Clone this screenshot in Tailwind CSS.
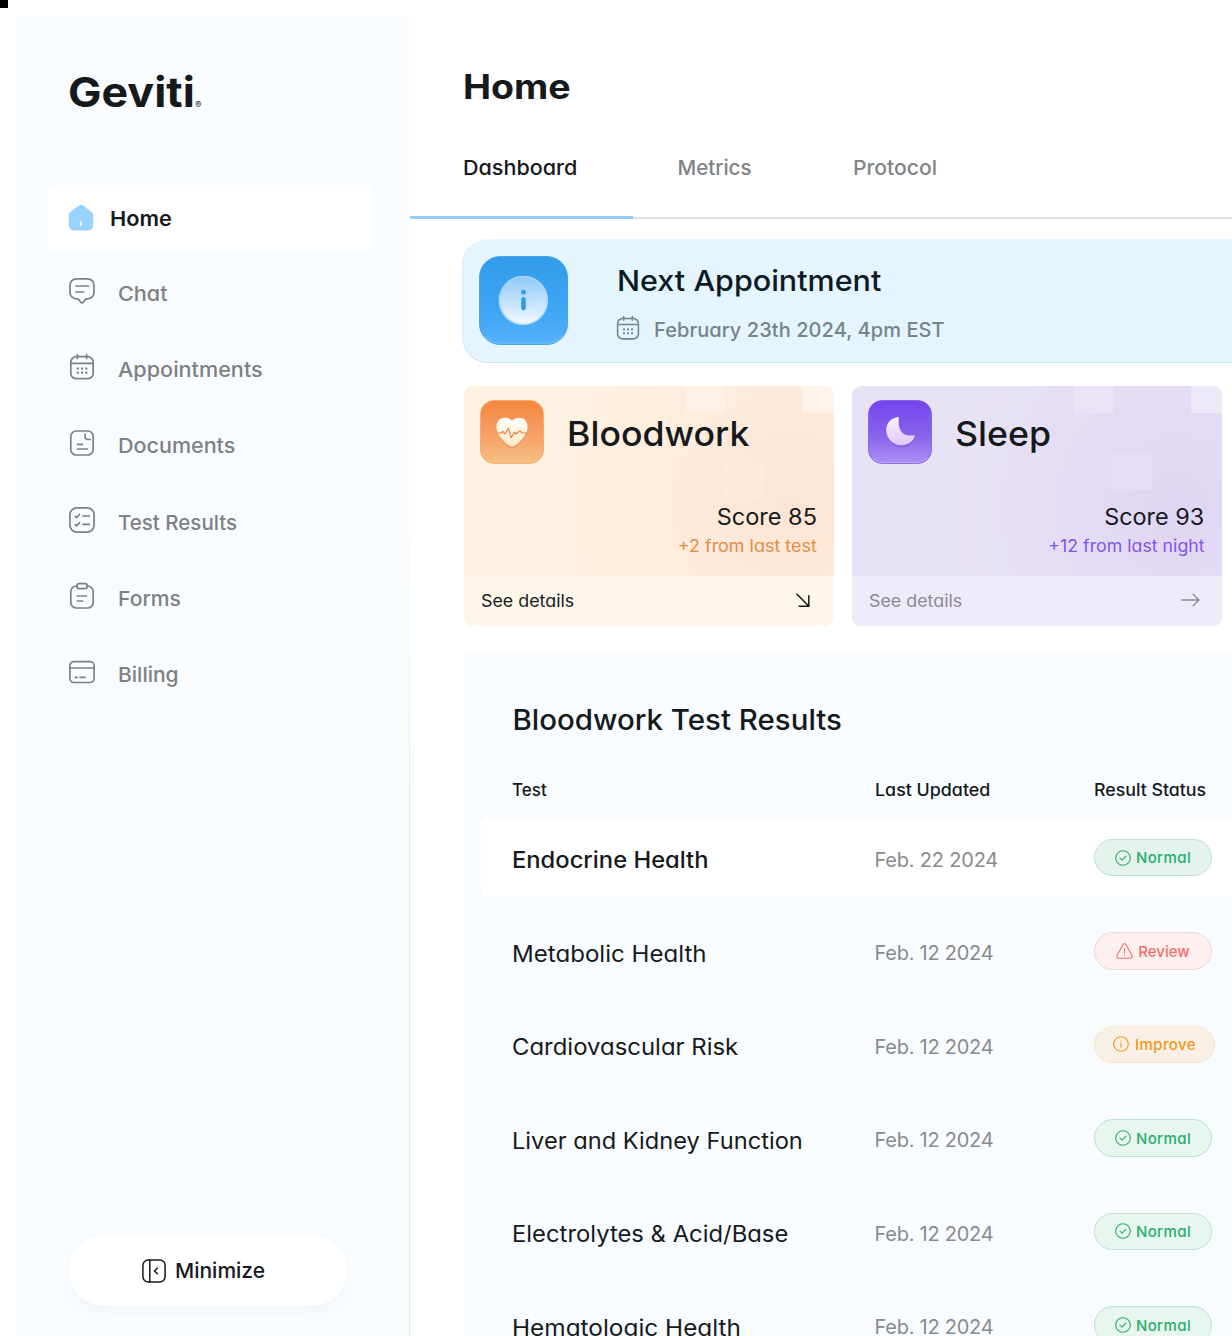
<!DOCTYPE html>
<html lang="en">
<head>
<meta charset="utf-8">
<title>Geviti</title>
<script src="https://cdn.jsdelivr.net/npm/@tailwindcss/browser@4"></script>
</head>
<body class="relative flex h-[1336px] w-[1232px] overflow-hidden bg-white font-['Inter',sans-serif] text-[#16191c] [font-feature-settings:'cv11']">
<div class="absolute left-0 top-0 size-2 bg-black"></div>

<svg class="hidden">
  <symbol id="calendar" viewBox="0 0 28 28"><g fill="none" stroke="currentColor" stroke-width="1.7" stroke-linecap="round"><rect x="2.8" y="3.7" width="22.4" height="22" rx="5.5"/><path d="M3 10.3h22M9.4 1.6v4M18.6 1.6v4"/></g><g fill="currentColor"><rect x="8.7" y="14.5" width="2.1" height="2.1"/><rect x="13" y="14.5" width="2.1" height="2.1"/><rect x="17.3" y="14.5" width="2.1" height="2.1"/><rect x="8.7" y="18.6" width="2.1" height="2.1"/><rect x="13" y="18.6" width="2.1" height="2.1"/><rect x="17.3" y="18.6" width="2.1" height="2.1"/></g></symbol>
  <symbol id="check" viewBox="0 0 16 16"><g fill="none" stroke="currentColor" stroke-width="1.1" stroke-linecap="round" stroke-linejoin="round"><circle cx="8" cy="8" r="7.3"/><path d="M5 8.2l2.1 2 3.8-4"/></g></symbol>
</svg>

<aside class="mt-4 ml-4 flex w-[393px] shrink-0 flex-col rounded-tl-md bg-[#f8fcff]">
  <div class="mt-14 flex h-10 items-center pl-[52px]">
    <span class="inline-block origin-left scale-x-[1.09] text-[41px] font-bold leading-10">Geviti</span><span class="mt-6 ml-[11px] text-[9px] leading-none">®</span>
  </div>
  <nav class="mt-[73px] flex flex-col text-[20.5px] font-medium leading-7 text-[#7d8184]">
    <a class="ml-[31px] flex h-[66px] w-[325px] items-center rounded-md bg-white pl-[21px] font-semibold text-[#16191c]">
      <svg class="size-[26px]" viewBox="0 0 25 25"><path d="M10.200.8a3.800 3.800 0 0 1 4.600 0l7.400 5.400A5 5 0 0 1 24.300 10.300v9.200a5 5 0 0 1-5 5H5.700a5 5 0 0 1-5-5V10.300a5 5 0 0 1 2.100-4.100z" fill="#99d3ff"/><path d="M12.300 15.200v4.800" stroke="#fff" stroke-width="1.300"/></svg>
      <span class="mt-[2px] ml-4 origin-left scale-x-[1.06]">Home</span>
    </a>
    <a class="mt-1 flex h-[76.3px] items-center pl-[52px]">
      <svg class="-mt-[5px] size-7" viewBox="0 0 28 28" fill="none" stroke="currentColor" stroke-width="1.700" stroke-linecap="round" stroke-linejoin="round"><path d="M8.300 1.800h11.400a6.300 6.300 0 0 1 6.300 6.300v7.400a6.300 6.300 0 0 1-6.300 6.300h-.7c-.9 0-1.600.4-2.100 1.100l-1.600 2.300a1.600 1.600 0 0 1-2.600 0l-1.600-2.300c-.5-.7-1.200-1.100-2.100-1.100h-.7A6.300 6.300 0 0 1 2 15.500V8.100a6.300 6.300 0 0 1 6.300-6.300z"/><path d="M8 9h12.300M8 15h7.800"/></svg>
      <span class="mt-px ml-[22px] origin-left scale-x-[1.055]">Chat</span>
    </a>
    <a class="flex h-[76.3px] items-center pl-[52px]">
      <svg class="-mt-[5px] size-7"><use href="#calendar"/></svg>
      <span class="mt-px ml-[22px] origin-left scale-x-[1.055]">Appointments</span>
    </a>
    <a class="flex h-[76.3px] items-center pl-[52px]">
      <svg class="-mt-[5px] size-7" viewBox="0 0 28 28" fill="none" stroke="currentColor" stroke-width="1.700" stroke-linecap="round"><rect x="2.800" y="2" width="22.400" height="24" rx="5.500"/><path d="M17 5.300v2.400a2.800 2.800 0 0 0 2.800 2.800h2.400M9.500 15.300h5M9.500 20h9.800"/></svg>
      <span class="mt-px ml-[22px] origin-left scale-x-[1.05]">Documents</span>
    </a>
    <a class="flex h-[76.3px] items-center pl-[52px]">
      <svg class="-mt-[5px] size-7" viewBox="0 0 28 28" fill="none" stroke="currentColor" stroke-width="1.700" stroke-linecap="round" stroke-linejoin="round"><rect x="1.900" y="1.900" width="24.200" height="24.200" rx="7"/><path d="M15 10h6.300M15 18.300h6.300M7.300 10.300l1.300 1.300 3-3.300M7.300 18.600l1.300 1.300 3-3.300"/></svg>
      <span class="mt-px ml-[22px] origin-left">Test Results</span>
    </a>
    <a class="flex h-[76.3px] items-center pl-[52px]">
      <svg class="-mt-[5px] size-7" viewBox="0 0 28 28" fill="none" stroke="currentColor" stroke-width="1.700" stroke-linecap="round"><path d="M9 4h-.5a5.700 5.700 0 0 0-5.700 5.700v10.600A5.700 5.700 0 0 0 8.500 26h11a5.700 5.700 0 0 0 5.700-5.700V9.700A5.700 5.700 0 0 0 19.500 4H19"/><rect x="9" y="1.600" width="10" height="5" rx="1.800"/><path d="M9.300 14h9.200M9.300 19h5.200"/></svg>
      <span class="mt-px ml-[22px] origin-left scale-x-[1.03]">Forms</span>
    </a>
    <a class="flex h-[76.3px] items-center pl-[52px]">
      <svg class="-mt-[5px] size-7" viewBox="0 0 28 28" fill="none" stroke="currentColor" stroke-width="1.700" stroke-linecap="round"><rect x="1.900" y="3.700" width="24.200" height="20.800" rx="4"/><path d="M2 10h24M7.300 19.300h1.800M12 19.300h5"/></svg>
      <span class="ml-[22px] origin-left scale-x-[1.025]">Billing</span>
    </a>
  </nav>
  <button class="mt-auto mb-[30px] ml-[53px] flex h-[71px] w-[278px] items-center rounded-full bg-white pl-[73px] shadow-[0_6px_14px_rgba(100,120,140,0.05)]">
    <svg class="size-6" viewBox="0 0 24 24" fill="none" stroke="currentColor" stroke-width="1.500" stroke-linecap="round" stroke-linejoin="round"><rect x=".9" y=".9" width="22.200" height="22.200" rx="5.500"/><path d="M7.800 1v22M15.300 9l-2.800 2.900 2.800 2.900"/></svg>
    <span class="mt-px ml-[9px] origin-left scale-x-[1.025] text-[20.500px] font-medium leading-7">Minimize</span>
  </button>
</aside>
<div class="w-px shrink-0 bg-linear-to-b from-white from-40% to-[#e6e9ea] to-60%"></div>

<main class="flex min-w-0 flex-1 flex-col">
  <h1 class="mt-[67px] h-10 shrink-0 pl-[52.500px] text-[33.500px] font-bold leading-10"><span class="inline-block origin-left scale-x-[1.12]">Home</span></h1>
  <div class="mt-[33px] flex h-[79px] shrink-0 border-b-2 border-[#dfe2e3] text-[20.500px] font-medium leading-7 text-[#808386]">
    <div class="-mb-[2px] w-[222.500px] border-b-[3px] border-[#9acdf6] pt-[14px] pl-[52.500px] text-[#16191c]"><span class="inline-block origin-left scale-x-[1.05]">Dashboard</span></div>
    <div class="w-[175px] pt-[14px] pl-[45px]"><span>Metrics</span></div>
    <div class="pt-[14px] pl-[45px]"><span class="inline-block origin-left scale-x-[1.03]">Protocol</span></div>
  </div>

  <section class="mt-5 ml-[52px] flex h-[123.500px] shrink-0 items-start rounded-l-[26px] border-b-[1.500px] border-l border-b-[#cfe4f4] border-l-[#dbecf8] bg-[#e5f5ff] pt-[17px] pl-4">
    <svg class="size-[89px] shrink-0" viewBox="0 0 90 90">
      <defs>
        <linearGradient id="blue" x2="0" y2="1"><stop stop-color="#329cec"/><stop offset=".6" stop-color="#3ea5f4"/><stop offset="1" stop-color="#55b0fb"/></linearGradient>
        <linearGradient id="disc" x2="0" y2="1"><stop stop-color="#8fc9fa"/><stop offset="1" stop-color="#f2f9ff"/></linearGradient>
      </defs>
      <rect x=".5" y=".5" width="89" height="89" rx="21" fill="url(#blue)" stroke="#3a96e0" stroke-width=".8"/>
      <path d="M6 81q5 7 15 7h48q10 0 15-7" fill="none" stroke="#72bffc" stroke-width="1.200"/>
      <circle cx="44.900" cy="45" r="24.300" fill="url(#disc)" stroke="#a5d6fd" stroke-width="1.500"/>
      <circle cx="45" cy="36.700" r="2.500" fill="#2f9bf0"/><rect x="42.700" y="41.500" width="4.600" height="13.300" rx="2.200" fill="#2f9bf0"/>
    </svg>
    <div class="ml-[49px]">
      <div class="mt-2 text-[29px] font-medium leading-[34px] text-[#0e1a24]"><span class="inline-block origin-left scale-x-[1.052]">Next Appointment</span></div>
      <div class="mt-[17px] flex items-center text-[20px] font-medium leading-7 text-[#77838b]">
        <svg class="-ml-[2px] -mt-1 size-[26px]"><use href="#calendar"/></svg>
        <span class="mt-px ml-[13px] tracking-[0.07px]">February 23th 2024, 4pm EST</span>
      </div>
    </div>
  </section>

  <section class="mt-[23.500px] ml-[53.500px] flex shrink-0 gap-[18px]">
    <article class="relative flex h-[240px] w-[370px] shrink-0 flex-col overflow-hidden rounded-[9px] bg-[radial-gradient(circle_at_88%_50%,#fde5d5,#fff1e1_65%)]">
      <div class="absolute top-0 left-[222px] h-[27px] w-[39px] bg-[#fff1e5]"></div>
      <div class="absolute top-0 left-[339px] h-[27px] w-[31px] bg-[#fff3ea]"></div>
      <div class="absolute top-[76px] left-[261px] h-[38px] w-[39px] bg-[#ffeadb]/70"></div>
      <div class="relative flex pt-[14px] pl-4">
        <svg class="size-16 shrink-0" viewBox="0 0 65 65">
          <defs>
            <linearGradient id="orange" x2="0" y2="1"><stop stop-color="#f6863f"/><stop offset=".55" stop-color="#f7a165"/><stop offset="1" stop-color="#f5c184"/></linearGradient>
            <linearGradient id="cream" x2="0" y2="1"><stop stop-color="#fff"/><stop offset="1" stop-color="#ffe9c4"/></linearGradient>
          </defs>
          <rect x=".5" y=".5" width="64" height="64" rx="14" fill="url(#orange)" stroke="#f3a065" stroke-width=".7"/>
          <path d="M32.500 22.300C29 17 22.500 16.700 19.200 20.300c-3.600 4-2.900 10.500-.2 15 2.700 4.500 7.300 9.500 11.300 11.400a5 5 0 0 0 4.400 0c4-1.900 8.600-6.900 11.300-11.400 2.700-4.500 3.400-11-.2-15C42.500 16.700 36 17 32.500 22.300z" transform="translate(0 2)" fill="#d9762f" opacity=".3"/>
          <path d="M32.500 20.800C29 17.500 22.500 16.700 19.200 20.300c-3.600 4-2.900 10.500-.2 15 2.700 4.500 7.300 9.500 11.300 11.400a5 5 0 0 0 4.400 0c4-1.900 8.600-6.900 11.300-11.400 2.700-4.500 3.400-11-.2-15C42.500 16.700 36 17.500 32.500 20.800z" fill="url(#cream)"/>
          <path d="M17.500 33.500h3.800l1.700-1.700 2.300 2.700 3.600-5.700 2.900 9.500 3.200-5.500 1.800 1.700 3.500-3.200 2.500 2.200h5" fill="none" stroke="#e8803c" stroke-width="1.200" stroke-linejoin="round"/>
        </svg>
        <h2 class="mt-[14px] ml-[23px] origin-left scale-x-[1.034] text-[34.500px] font-medium leading-10">Bloodwork</h2>
      </div>
      <div class="relative mt-[39px] flex flex-col items-end pr-[17px]">
        <div class="origin-right scale-x-[1.045] text-[22.500px] leading-7">Score 85</div>
        <div class="mt-[3px] origin-right scale-x-[1.055] text-[17px] leading-6 text-[#e38c48]">+2 from last test</div>
      </div>
      <div class="relative mt-auto flex h-[50px] items-center justify-between bg-[#fef6eb] pr-[22px] pl-[17px]">
        <span class="mt-[2px] origin-left scale-x-[1.05] text-[17px]">See details</span>
        <svg class="mr-px size-4" viewBox="0 0 16 16" fill="none" stroke="currentColor" stroke-width="1.500"><path d="M1.500.8l12.200 12.200M13.800 2.300v10.900H3.600"/></svg>
      </div>
    </article>
    <article class="relative flex h-[240px] w-[370px] shrink-0 flex-col overflow-hidden rounded-[9px] bg-[radial-gradient(circle_at_88%_50%,#e0d5f4,#e8e3f4_65%)]">
      <div class="absolute top-0 left-[222px] h-[27px] w-[39px] bg-[#ebe4f6]"></div>
      <div class="absolute top-0 left-[339px] h-[27px] w-[31px] bg-[#ede8f7]"></div>
      <div class="absolute top-[66px] left-[261px] h-[38px] w-[39px] bg-[#e7dff6]/70"></div>
      <div class="relative flex pt-[14px] pl-4">
        <svg class="size-16 shrink-0" viewBox="0 0 65 65">
          <defs>
            <linearGradient id="violet" x2="0" y2="1"><stop stop-color="#7544f0"/><stop offset=".55" stop-color="#8763ea"/><stop offset="1" stop-color="#aa8ef6"/></linearGradient>
            <linearGradient id="pearl" x2="0" y2="1"><stop stop-color="#faf2ff"/><stop offset="1" stop-color="#dfc6fb"/></linearGradient>
          </defs>
          <rect x=".5" y=".5" width="64" height="64" rx="14" fill="url(#violet)" stroke="#7250d8" stroke-width=".7"/>
          <path d="M5 59q4 4.500 10 4.500h35q6 0 10-4.500" fill="none" stroke="#bba4fa" stroke-width=".9"/>
          <path d="M30 17.200C23 18.300 17.800 24.300 18.500 32c.8 8.300 8 14.700 16.300 14 6.500-.5 11-4.100 12.500-8.400.4-1.200-.4-2-1.600-1.800-6.300 1-11.300-1.500-13.200-6.200-1.300-3.200-1.600-7-1.200-10.800.1-1.200-.4-1.800-1.300-1.600z" transform="translate(.3 2)" fill="#5a35c8" opacity=".3"/>
          <path d="M30 17.200C23 18.300 17.800 24.300 18.500 32c.8 8.300 8 14.700 16.300 14 6.500-.5 11-4.100 12.500-8.400.4-1.200-.4-2-1.600-1.800-6.300 1-11.300-1.500-13.200-6.200-1.300-3.200-1.600-7-1.200-10.800.1-1.200-.4-1.800-1.300-1.600z" fill="url(#pearl)"/>
        </svg>
        <h2 class="mt-[14px] ml-[23px] origin-left scale-x-[1.035] text-[34.500px] font-medium leading-10">Sleep</h2>
      </div>
      <div class="relative mt-[39px] flex flex-col items-end pr-[17px]">
        <div class="origin-right scale-x-[1.04] text-[22.500px] leading-7">Score 93</div>
        <div class="mt-[3px] origin-right scale-x-[1.045] text-[17px] leading-6 text-[#8355e6]">+12 from last night</div>
      </div>
      <div class="relative mt-auto flex h-[50px] items-center justify-between bg-[#eeeaf7] pr-[22px] pl-[17px] text-[#8c8a91]">
        <span class="mt-[2px] origin-left scale-x-[1.05] text-[17px]">See details</span>
        <svg class="-mt-[2px] h-[14px] w-[19px]" viewBox="0 0 19 14" fill="none" stroke="currentColor" stroke-width="1.300"><path d="M.5 7h17.500M11.700.8L18 7l-6.300 6.200"/></svg>
      </div>
    </article>
  </section>

  <section class="mt-[26px] ml-[53.500px] min-h-0 flex-1 rounded-tl-md bg-[#f8fcff] pt-[50px]">
    <h3 class="w-[400px] origin-left scale-x-[1.052] pl-[46px] text-[28px] font-medium leading-9">Bloodwork Test Results</h3>
    <div class="mt-[39px] flex h-7 items-center pl-[48.500px] text-[17px] font-medium">
      <div class="w-[362.500px]">Test</div><div class="w-[219.500px]"><span class="inline-block origin-left scale-x-[1.05]">Last Updated</span></div><div class="whitespace-nowrap"><span class="inline-block origin-left scale-x-[1.045]">Result Status</span></div>
    </div>
    <div class="mt-[13.500px] ml-[17px] flex h-[78px] items-center rounded-l-md bg-white pl-[31.500px]">
      <div class="mt-[5px] w-[362.500px] text-[22.500px] font-medium"><span class="inline-block origin-left scale-x-[1.056]">Endocrine Health</span></div>
      <div class="mt-[5px] w-[219.500px] text-[20px] tracking-[-0.2px] text-[#888b8d]">Feb. 22 2024</div>
      <div class="flex h-[37.500px] w-[118px] items-center justify-center gap-[5px] rounded-full border border-[#b9e3d3] bg-[#e4f4ed] text-[15px] font-medium text-[#27ae6f]"><svg class="size-4"><use href="#check"/></svg><span class="mt-[2px] tracking-[0.400px]">Normal</span></div>
    </div>
    <div class="mt-[7.700px] flex h-[93.500px] items-center pl-[48.500px]">
      <div class="mt-[5px] w-[362.500px] text-[22.500px]"><span class="inline-block origin-left scale-x-[1.07]">Metabolic Health</span></div>
      <div class="mt-[5px] w-[219.500px] text-[20px] tracking-[-0.25px] text-[#888b8d]">Feb. 12 2024</div>
      <div class="flex h-[37.500px] w-[118px] items-center justify-center gap-[5px] rounded-full border border-[#f4d3d3] bg-[#feefef] text-[15px] font-medium text-[#f07068]"><svg class="h-4 w-[17px]" viewBox="0 0 17 16" fill="none" stroke="currentColor" stroke-width="1.100" stroke-linecap="round" stroke-linejoin="round"><path d="M6.900 1.700a1.800 1.800 0 0 1 3.200 0l5.900 10.700a1.900 1.900 0 0 1-1.600 2.800H2.600A1.900 1.900 0 0 1 1 12.400zM8.500 5.800v4M8.500 12v.3"/></svg><span class="mt-[2px]">Review</span></div>
    </div>
    <div class="flex h-[93.500px] items-center pl-[48.500px]">
      <div class="mt-[5px] w-[362.500px] text-[22.500px]"><span class="inline-block origin-left scale-x-[1.063]">Cardiovascular Risk</span></div>
      <div class="mt-[5px] w-[219.500px] text-[20px] tracking-[-0.25px] text-[#888b8d]">Feb. 12 2024</div>
      <div class="flex h-[37.500px] w-[121px] items-center justify-center gap-[6px] rounded-full border border-[#f5e6cd] bg-[#f8f0e4] text-[15px] font-medium text-[#f59518]"><svg class="size-4" viewBox="0 0 16 16" fill="none" stroke="currentColor" stroke-width="1.100" stroke-linecap="round"><circle cx="8" cy="8" r="7.300"/><path d="M8 7.300v4M8 4.700v.3"/></svg><span class="mt-[2px] tracking-[0.400px]">Improve</span></div>
    </div>
    <div class="flex h-[93.500px] items-center pl-[48.500px]">
      <div class="mt-[5px] w-[362.500px] text-[22.500px]"><span class="inline-block origin-left scale-x-[1.051]">Liver and Kidney Function</span></div>
      <div class="mt-[5px] w-[219.500px] text-[20px] tracking-[-0.25px] text-[#888b8d]">Feb. 12 2024</div>
      <div class="flex h-[37.500px] w-[118px] items-center justify-center gap-[5px] rounded-full border border-[#b9e3d3] bg-[#e7f6ef] text-[15px] font-medium text-[#27ae6f]"><svg class="size-4"><use href="#check"/></svg><span class="mt-[2px] tracking-[0.400px]">Normal</span></div>
    </div>
    <div class="flex h-[93.500px] items-center pl-[48.500px]">
      <div class="mt-[5px] w-[362.500px] text-[22.500px]"><span class="inline-block origin-left scale-x-[1.059]">Electrolytes &amp; Acid/Base</span></div>
      <div class="mt-[5px] w-[219.500px] text-[20px] tracking-[-0.25px] text-[#888b8d]">Feb. 12 2024</div>
      <div class="flex h-[37.500px] w-[118px] items-center justify-center gap-[5px] rounded-full border border-[#b9e3d3] bg-[#e7f6ef] text-[15px] font-medium text-[#27ae6f]"><svg class="size-4"><use href="#check"/></svg><span class="mt-[2px] tracking-[0.400px]">Normal</span></div>
    </div>
    <div class="flex h-[93.500px] items-center pl-[48.500px]">
      <div class="mt-[5px] w-[362.500px] text-[22.500px]"><span class="inline-block origin-left scale-x-[1.083]">Hematologic Health</span></div>
      <div class="mt-[5px] w-[219.500px] text-[20px] tracking-[-0.25px] text-[#888b8d]">Feb. 12 2024</div>
      <div class="flex h-[37.500px] w-[118px] items-center justify-center gap-[5px] rounded-full border border-[#b9e3d3] bg-[#e7f6ef] text-[15px] font-medium text-[#27ae6f]"><svg class="size-4"><use href="#check"/></svg><span class="mt-[2px] tracking-[0.400px]">Normal</span></div>
    </div>
  </section>
</main>
</body>
</html>
